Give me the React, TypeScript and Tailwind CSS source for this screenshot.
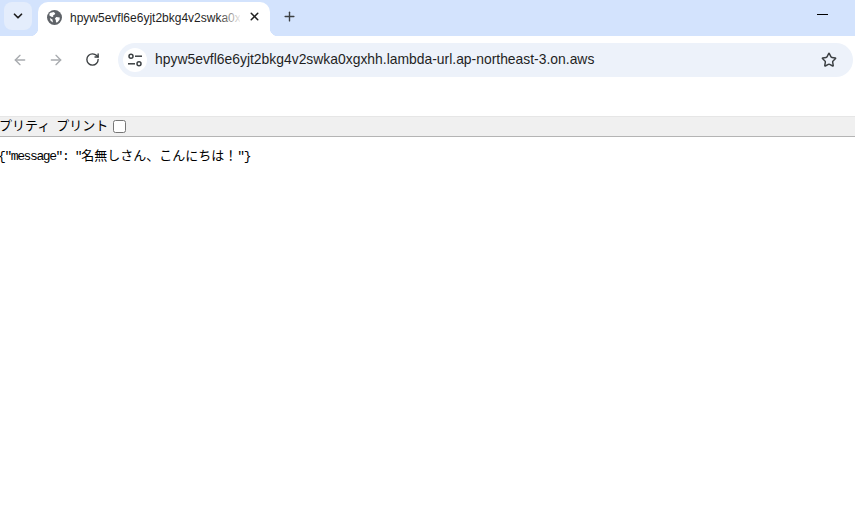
import { ArrowLeft, ArrowRight, ChevronDown, Plus, RotateCw, Star, X } from "lucide-react";

const url = "hpyw5evfl6e6yjt2bkg4v2swka0xgxhh.lambda-url.ap-northeast-3.on.aws";

const GlobeIcon = () => (
  <svg width="15" height="15" viewBox="0 0 16 16" className="shrink-0">
    <circle cx="8" cy="8" r="8" fill="#5f6368" />
    <path d="M3 3.2 L7 2.2 L8.8 3.4 L8 5 L6.6 5.6 L6.6 7.4 L4.6 7.2 L2.4 5.6 Z" fill="#fff" />
    <path d="M9.8 7.4 L13.6 8 L13.4 10.4 L11.2 13 L9.6 13.4 L9.4 10.6 L8.4 9.4 Z" fill="#fff" />
    <path d="M3 8.6 L5.8 10 L6.4 13.4 L3.8 11.4 Z" fill="#fff" />
  </svg>
);

const TuneIcon = () => (
  <svg width="16" height="16" viewBox="0 0 16 16" fill="none" stroke="#3c4043" strokeWidth="1.5">
    <circle cx="4" cy="4.2" r="2" />
    <path d="M8 4.2 H15" />
    <circle cx="12" cy="11.8" r="2" />
    <path d="M1 11.8 H8" />
  </svg>
);

const App = () => {
  return (
    <div className="h-screen bg-white overflow-hidden" style={{ fontFamily: "'Liberation Sans', Arial, sans-serif" }}>
      {/* tab strip */}
      <div className="h-9 bg-[#d3e3fd] flex items-end pl-1 pr-[27px]">
        <button className="w-7 h-7 self-start mt-[2px] rounded-lg bg-[#e4edfc] flex items-center justify-center text-[#1f1f1f]">
          <ChevronDown size={14} strokeWidth={3} />
        </button>
        <div className="relative ml-[6px] w-[232px] h-[34px] bg-white rounded-t-[10px] flex items-center pl-[9px] pb-[3px]">
          <div className="absolute -left-2 bottom-0 w-2 h-2 bg-[radial-gradient(circle_at_0_0,transparent_8px,white_8.5px)]" />
          <div className="absolute -right-2 bottom-0 w-2 h-2 bg-[radial-gradient(circle_at_100%_0,transparent_8px,white_8.5px)]" />
          <GlobeIcon />
          <span className="ml-[8px] w-[170px] overflow-hidden whitespace-nowrap text-[12px] text-[#1f1f1f]">{url}</span>
          <div className="absolute left-[180px] top-0 w-[24px] h-full bg-gradient-to-r from-transparent to-white" />
          <X size={13} strokeWidth={2.8} className="absolute right-[9px] top-[8px] text-[#1f1f1f]" />
        </div>
        <Plus size={15} strokeWidth={2.2} className="ml-[12px] mb-[12px] text-[#3c4043]" />
        <div className="ml-auto mb-[21px] w-[11px] h-[1px] bg-black" />
      </div>
      {/* toolbar */}
      <div className="h-[46px] flex items-center pl-3 pr-[2px] pt-[1px]">
        <ArrowLeft size={16} strokeWidth={2} className="text-[#a8abaf]" />
        <ArrowRight size={16} strokeWidth={2} className="ml-5 text-[#a8abaf]" />
        <RotateCw size={15} strokeWidth={2.2} className="ml-[21px] text-[#3c4043]" />
        <div className="ml-[18px] flex-1 h-[34px] rounded-full bg-[#edf2fa] flex items-center pl-[5px] pr-4">
          <div className="w-6 h-6 rounded-full bg-white flex items-center justify-center">
            <TuneIcon />
          </div>
          <span className="ml-[8px] text-[13.9px] text-[#1f1f1f]">{url}</span>
          <Star size={16} strokeWidth={2.2} className="ml-auto text-[#3c4043]" />
        </div>
      </div>
      {/* pretty print bar */}
      <div className="mt-[34px] h-[21px] bg-[#f0f0f0] border-y border-t-[#e6e6e6] border-b-[#b4b4b4] flex items-center text-[13px] text-black" style={{ fontFamily: "'Noto Sans CJK JP', sans-serif" }}>
        <span className="-ml-px pb-[3px] [word-spacing:3px]">プリティ プリント</span>
        <input type="checkbox" className="ml-[5px] w-[13px] h-[13px] appearance-none bg-white border border-[#767676] rounded-[2.5px]" />
      </div>
      <pre className="mt-[9px] -ml-[2px] text-[13px] leading-[17px] text-black" style={{ fontFamily: "'Liberation Mono', 'Noto Sans CJK JP', monospace" }}>
        <span className="text-[13px] tracking-[-1.4px]">{'{"message": "'}</span>
        <span style={{ fontFamily: "'Noto Sans CJK JP', sans-serif" }}>名無しさん、こんにちは！</span>
        <span className="text-[13px] tracking-[-1.4px]">{'"}'}</span>
      </pre>
    </div>
  );
};

export default App;
